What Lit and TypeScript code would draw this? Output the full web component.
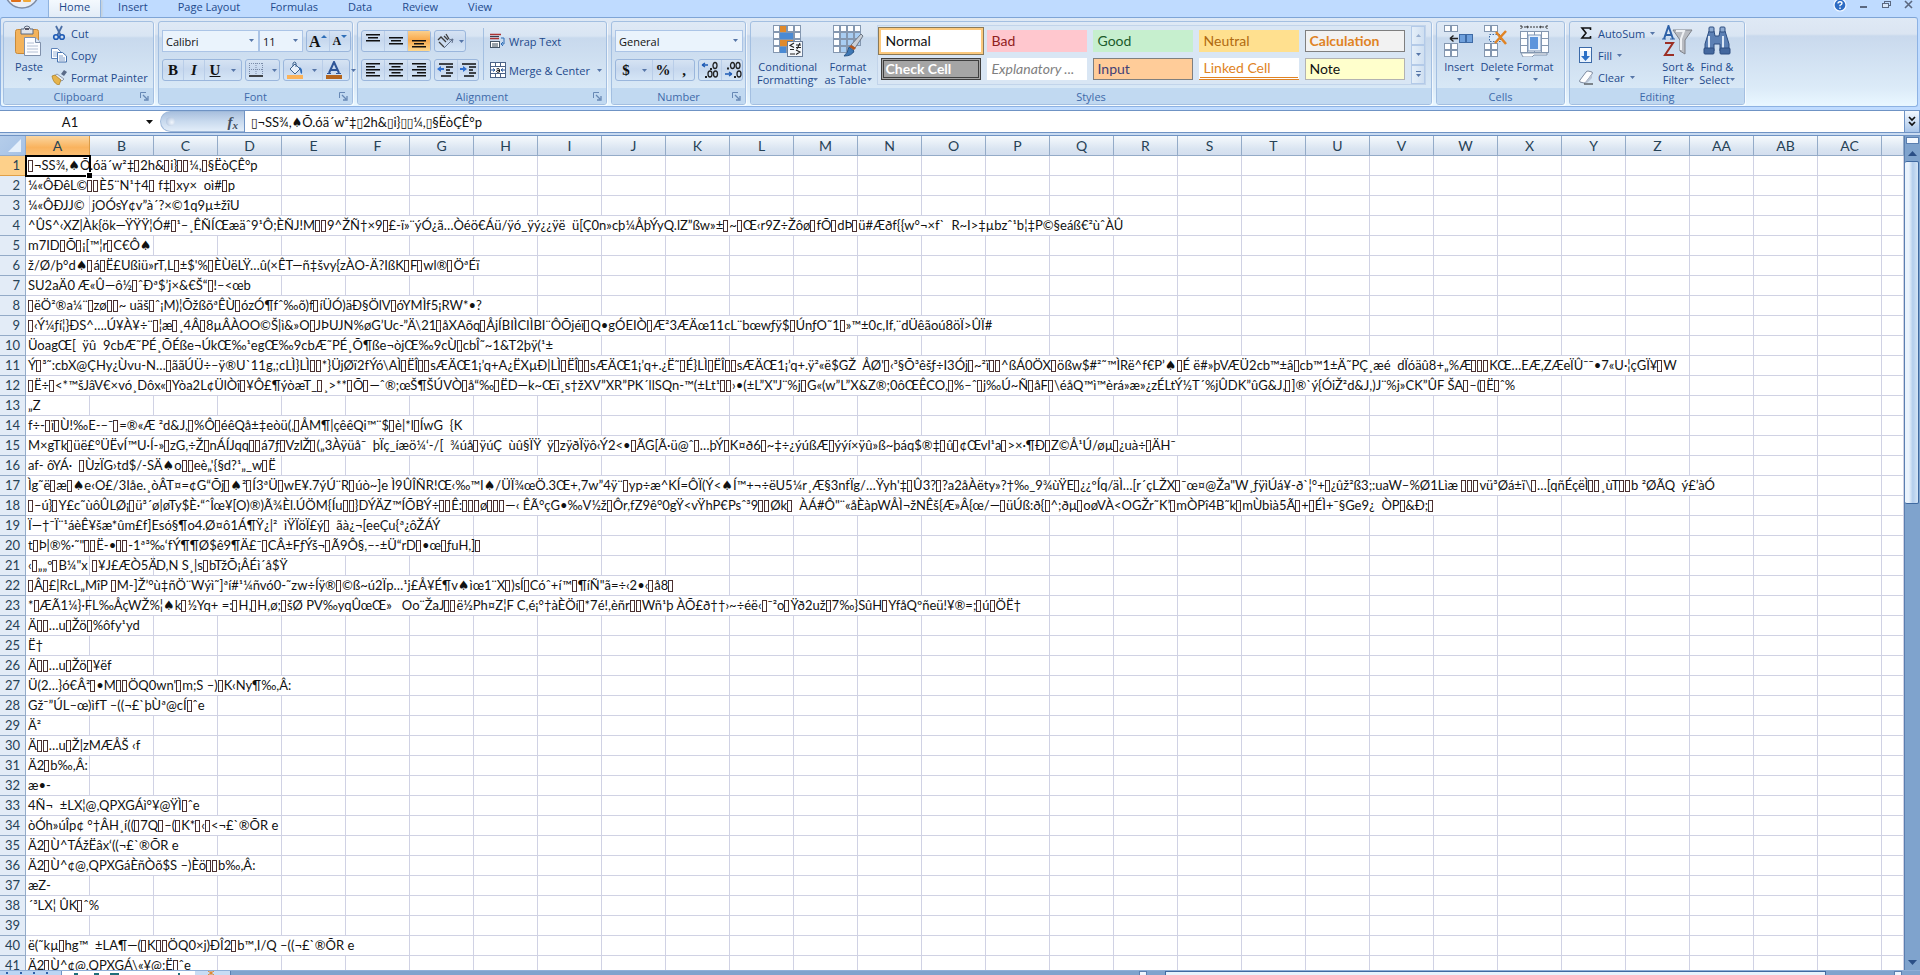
import { LitElement, html, css, svg, nothing } from "lit";
import { customElement } from "lit/decorators.js";
import { classMap } from "lit/directives/class-map.js";

type Cell = [span: number, text: string];

const COLUMNS = [..."ABCDEFGHIJKLMNOPQRSTUVWXYZ", "AA", "AB", "AC"];

const ROWS: Cell[][] = [
  [[4, "▯¬SS¾,♠Õ.óä´w²‡▯2h&▯i}▯▯¼,▯§ËòÇÊ°p"]],
  [[4, "¼«ÔÐêL©▯▯È5¨N¹†4▯ f‡▯xy×  oì#▯p"]],
  [[1, "¼«ÔÐJJ©"], [3, "jOÓsY¢v”à´?×©1q9µ±žîU"]],
  [[18, "^ÛS^‹XZ|Àk{ök—ŸŸŸ¦Ó#▯¹–¸ÊÑÍŒæäˆ9¹Ô;ÈÑJ!M▯▯9^ŽÑ†×9▯£-ï»¨ýÓ¿ã…Òéö€Áü/ÿó_ÿý¿¿ÿë  ü[Ç0n»cþ¼ÅþÝyQ.lZ”ßw»±▯~▯Œ‹r9Z÷Žôø▯fÕ▯dÞ▯ü#Æðf{{w°¬×f`  R~I>‡µbzˆ¹b¦‡P©§eáß€²ùˆÀÛ"]],
  [[2, "m7ID▯Õ▯¡[™¦r▯C€Ô♠"]],
  [[8, "ž/Ø/þ°d♠▯á▯Ë£Ußiü»rT,L▯±$'%▯ÈÙëLŸ…û(×ÊT—ñ‡švy{zÀO-Ä?IßK▯F▯wl®▯ÖªÉï"]],
  [[4, "SU2aÄ0 Æ«Û—ô½▯ˆÐª$’j×&€Š“▯!–<œb"]],
  [[8, "▯ëÖ²®a¼¨▯zø▯▯~ uäš▯ˆ¡M)¦ÕžßõªÊÙ▯ózÓ¶fˆ‰õ)f▯íÜÓ)äÐ§ÖlV▯óYMÌf5¡RW*•?"]],
  [[16, "▯‹Ý¼ƒí¦}ÐS^….Ú¥À¥÷¨▯¦æ▯¸4Â▯8µÂÀOO©Š|ì&»O▯JÞUJN%øG’Uc-”Ä\\21▯åXAõq▯ÅjÍBIÌCIÌBI¨ÔÕjéï▯Q•gÓEIÒ▯Æ²3ÆÄœ11cL¨bœwƒÿ$▯ÚnƒO˜1▯»™±0c,If,¨dÜêãoú8öÏ>ÛÏ#"]],
  [[9, "ÜoagŒ[  ÿû  9cbÆ˜PÉ¸ÕÉße¬ÚkŒ‰¹egŒ‰9cbÆ˜PÉ¸Õ¶ße¬òjŒ‰9cÙ▯cbÎ˜~1&T2þÿ(¹±"]],
  [[26, "Ý▯³˜:cbX@ÇHy¿Ùvu-N…▯ããÚÜ÷–ÿ®U`11g,;cLÌ}LÌ▯▯*}ÜjØï2fÝó\\AÌ▯ËÎ▯▯sÆÄŒ1¡’q+A¿ËXµÐ|LÌ▯ËÎ▯▯sÆÄŒ1¡’q+.¿Ë˜▯É}LÌ▯ËÎ▯▯sÆÄŒ1¡’q+.ÿ²«ë$GŽ  ÅØ'▯‹³§Õ³êšƒ÷I3Ój▯~²ï▯▯^ßÁ0ÖX▯ößw$#²˜™ÌRë^f€P’♠▯É ë#»þVÆÜ2cb™±â▯cb™1±Ä˜PÇ¸æé  dÏóäû8+„%Æ▯▯▯KŒ…EÆ,ZÆeÏÛ¯¯•7«U·¦çGÏ¥▯W"]],
  [[24, "▯Ë÷▯<*™šJâV€×vó¸Dôx«▯Yòa2L¢ÜlÒî▯¥Ô£¶ýòæT_▯¸>**▯Õ▯—ˆ®;œŠ¶ŠÚVÒ▯å“‰▯ËD—k~Œï¸s†žXV”XR”PK´llSQn-™(±Lt¹▯▯›•(±L”X\"J¨%j▯G«(w”L”X&Z®;0ôŒÊCO,▯%–ˆ▯j‰Ú~Ñ▯åF▯\\éåQ™ì™èrá»æ»¿zÉLtÝ½T´%jÛDK”ûG&J,▯]®`ý{ÓiŽ²d&J,)J¨%j»CK”ÛF ŠA▯–(▯Ë▯ˆ%"]],
  [[1, "„Z"]],
  [[7, "f÷-▯ï▯Ù!‰E-–¯▯=®«Æ ²d&J,▯%Ô▯éêQå±‡eòü(,▯ÅM¶|çêêQi™¨$▯è|*l▯ÍwG  {K"]],
  [[19, "M×gTk▯üë£°ÜËvÍ™U·Í-»▯zG,÷Ž▯nÁÍJqq▯▯á7ƒ▯VzlŽ▯(„3Àÿüå¯  þÏç_íæö¼‘-/[  ¾úå▯ÿúÇ  ùû§ÏŸ  ÿ▯zÿðÏÿô‹Ý2<•▯ÃG[Ã·ü@ˆ▯…þÝ▯K¤ð6▯~‡÷¿ýúßÆ▯ýýí×ÿû»ß~þáq$®‡▯û▯¢Œvl¹a▯>×·¶Ð▯Z©Å¹Ú/øµ▯¿uà÷▯ÄH¯"]],
  [[4, "af- ôYÁ·  ▯ÙzÏG›td$/-SÄ♠o▯▯eè„'{§d?¹„_w▯Ë"]],
  [[27, "Ìg˜ë▯æ▯♠e‹O£/3Iåe.¸òÂT¤=¢G“Õj▯♠²▯Í3ªÜ▯wE¥.7ýÚ¨R▯úò~]e Ì9ÛÎÑR!Œ‹‰™I♠/ÜÏ¾œÖ.3Œ+,7w”4ÿ¨▯yp÷æ^KÍ=ÔÏ(Ý<♠Í™+¬÷ëU5¼r¸Æ§3nfÏg/…Ÿyh'‡▯Û3?▯?a2åÀëty»?†‰_9¾ùŸE▯¿¿ºÍq/äÌ…[r´çLŽX▯¯œ¤@Ža\"W¸ƒÿìÚá¥-ð`¦°+▯¿ûž²ß3;:uaW–%Ø1Lìæ ▯▯▯vü³Øá±ï\\▯…[qñÉçëÌ▯▯¸ùT▯▯b ²ØÃQ  ý£’àÓ"]],
  [[23, "▯–ú}▯Y£c˜ùôÛLØ¡▯ü³´ø|øTy$È·“ˆÎœ¥[O)®)Ã¾Èl.ÚÖM{Íu▯▯}DÝÄZ™ÍÕBÝ÷▯▯Ê:▯▯▯ø▯▯▯—‹ ÊÃ°çG•‰V½ž▯Ôr,fZ9ê°0gŸ<vŸhP€Psˆ³9▯▯Øk▯  ÀÁ#Ô\"¨«åÈàpWÅÌ¬žNÊš{Æ»Â{œ/—▯üÚß:ð{▯^;ðµ▯oøVÀ<OGŽr˜K’▯mÒPî4B˜k▯mÙbìà5Ã▯+▯ÉÌ+¯§Ge9¿  ÒP▯&Ð;▯"]],
  [[7, "Ï—†¯Ï¨¹áèÊ¥šæ*ûm£f]Esó§¶o4.Ø¤ô1Á¶Ÿ¿|²  ìŸÏöÏ£ý▯  ãà¿¬[eeÇu{ª¿ôŽÁÝ"]],
  [[7, "t▯Þ|®%·˜\"▯▯Ë-•▯▯-1ª³‰‘fÝ¶¶Ø$ê9¶Ä£¯▯CÂ±FƒÝš¬▯Ã9Ô§,–-±Ü“rD▯•œ▯ƒuH,]▯"]],
  [[1, "‹▯„„º▯B¼\"x"], [1, "▯¥J£ÆÒ5Ä"], [3, "D,N S¸|s▯bTžÕ¡ÂÉì´å$Ÿ"]],
  [[11, "▯Â▯£|RcL„MîP ▯M-]Ž’°ù‡ñÖ¨Wýì˜]ªí#¹¼ñvó0-˜zw÷Íÿ®▯©ß~ú2Ïp…¹j£Å¥É¶v♠ìœ1¨X▯)sÍ▯Cóˆ+í™▯¶íÑ\"ã=÷‹2•‹▯å8▯"]],
  [[1, "*▯ÆÃ1¼}·F"], [15, "L‰ÅçWŽ%¦♠k▯½Yq+ =:▯H,▯H,ø;▯šØ PV‰yqÛœŒ»   Oo¨ŽaJ▯▯ë½Ph¤Z¦F C,é¡°†àÈÖí▯*7é!,èñr▯▯Wñ¹þ ÀÕ£ð††›~÷éë‹▯¯²o▯Ÿð2už▯7‰}SûH▯YfåQºñeü!¥®=;▯ú▯ÖË†"]],
  [[2, "Ä▯▯…u▯Žö▯%ôfy¹yd"]],
  [[1, "Ë†"]],
  [[2, "Ä▯▯…u▯Žö▯¥ëf"]],
  [[5, "Ü(2…}ó€Â²▯•M▯▯ÖQ0wn'▯m;S –)▯K‹Ny¶‰,Â:"]],
  [[3, "Gž¯”ÚL–œ)ìfT –((¬£`þÙª@cÍ▯ˆe"]],
  [[1, "Ä²"]],
  [[2, "Ä▯▯…u▯Ž|zMÆÅŠ ‹f"]],
  [[1, "Ä2▯b‰,Â:"]],
  [[1, "æ•-"]],
  [[3, "4Ñ¬  ±LX¦@,QPXGÁì°¥@ŸÌ▯ˆe"]],
  [[4, "òÓh»úÎp¢ °†ÂH¸í((▯7Q▯–(▯K*▯‹▯<¬£`®ÕR e"]],
  [[3, "Ä2▯Ù^TÁžËâx‘((¬£`®ÕR e"]],
  [[4, "Ä2▯Ù^¢@,QPXGáÈñÒõ$S –)Èö▯▯b‰,Â:"]],
  [[1, "æZ-"]],
  [[2, "´³LX¦ ÛK▯ˆ%"]],
  [],
  [[6, "ë(˜kµ▯hg™  ±LA¶—(▯K▯▯ÖQ0×j)ÐÎ2▯b™,I/Q –((¬£`®ÕR e"]],
  [[3, "Ä2▯Ù^¢@,QPXGÁ\\«¥@;Ë▯ˆe"]],
];

/* ---------- icons ---------- */
const icon = (w: number, h: number, body: unknown) =>
  html`<svg width=${w} height=${h} viewBox="0 0 ${w} ${h}" aria-hidden="true">${body}</svg>`;

const caret = html`<svg class="caret" width="5" height="3" viewBox="0 0 5 3" aria-hidden="true"><path d="M0 0h5L2.5 3z" fill="#5676a8" /></svg>`;

const lines = (widths: number[], align: "l" | "c" | "r", y0: number) =>
  icon(16, 16, widths.map((w, i) => {
    const x = align === "l" ? 1 : align === "c" ? (16 - w) / 2 : 15 - w;
    return svg`<rect x=${x} y=${y0 + i * 3} width=${w} height="1.5" fill="#111"/>`;
  }));

const cells = (pts: number[][], w: number, h: number, fill: string, stroke = "#8497b0") =>
  pts.map(([x, y]) => svg`<rect x=${x + 0.5} y=${y + 0.5} width=${w} height=${h} fill=${fill} stroke=${stroke}/>`);

const I = {
  paste: icon(32, 32, svg`
    <rect x="2.5" y="4.5" width="23" height="24" rx="2" fill="#f3b35c" stroke="#c98a3a"/>
    <path d="M8 4h3a3 3 0 0 1 6 0h3v5H8z" fill="#dfe3ea" stroke="#5d6b80"/><rect x="12" y="3" width="4" height="2" fill="#556"/>
    <path d="M11.5 12.5h11l5 5v13h-16z" fill="#fbfcff" stroke="#7f90ab"/><path d="M22.5 12.5v5h5" fill="#dbe6f5" stroke="#7f90ab"/>
    <path d="M14 18h7M14 21h11M14 24h11M14 27h11" stroke="#b4c0d4"/>`),
  cut: icon(16, 16, svg`<path d="M5 1l4.5 9M11 1L6.5 10" stroke="#4b6ea5" stroke-width="1.8" fill="none"/>
    <circle cx="5" cy="12" r="2.3" fill="none" stroke="#1f5bb5" stroke-width="1.6"/><circle cx="11" cy="12" r="2.3" fill="none" stroke="#1f5bb5" stroke-width="1.6"/>`),
  copy: icon(16, 16, svg`<path d="M.5 1.5h6l3 3v7h-9z" fill="#fff" stroke="#5e83b8"/><path d="M2 5h5M2 7h5M2 9h5" stroke="#9bb5d9"/>
    <path d="M6.5 5.5h5l4 3.5v6h-9z" fill="#fff" stroke="#4571ad"/><path d="M8 9h4M8 11h6M8 13h6" stroke="#7e9ecb"/>`),
  painter: icon(16, 16, svg`<path d="M10 5l3-4 3 2-3 4z" fill="#5a6b88"/><path d="M6 5l7 5-2 2-8-5z" fill="#e7ecf3" stroke="#6b7a92" stroke-width=".7"/>
    <path d="M1 7l3-1 6 5-2 5c-4-1-6-4-7-9z" fill="#e6b44c" stroke="#a87818" stroke-width=".7"/>`),
  border: icon(16, 16, svg`<path d="M1.5 1v12M8 1v12M14.5 1v12M1 1.5h14M1 7.5h14" stroke="#7a8ba8" stroke-dasharray="1 1"/><path d="M1 14h14" stroke="#111" stroke-width="1.5"/>`),
  fill: icon(18, 18, svg`<path d="M4 8l5-5 5 5-5 5z" fill="#e8f0fa" stroke="#41658f"/><path d="M7 5V2q2-2 3 0v4" fill="none" stroke="#41658f"/>
    <path d="M13 6q4 1 3 7-2-1-2-4z" fill="#2f6bb8"/><rect x="1" y="14" width="16" height="4" fill="#fbb35a"/>`),
  fontColor: icon(18, 18, svg`<path d="M4 12L9 1l5 11M6 9h6" fill="none" stroke="#2f5597" stroke-width="2"/><path d="M2 12.5h4M11 12.5h5" stroke="#2f5597"/><rect x="1" y="14" width="16" height="4" fill="#b5651d"/>`),
  orient: icon(18, 16, svg`<path d="M2 9l5 5M1 7l3-3 5 5M7 3l4 4M9 1l3 5" stroke="#3c3c3c" stroke-width="1.3" fill="none"/><path d="M7 15l9-9M16 6l-4 1M16 6l-1 4" stroke="#5f6f8a" fill="none"/>`),
  outdent: icon(18, 16, svg`<path d="M2 2h14M9 5h7M9 8h4M9 11h7M4 14h10" stroke="#111" stroke-width="1.5"/><path d="M0 7l4-3v2h3v2H4v2z" fill="#2f6fd0"/>`),
  indent: icon(18, 16, svg`<path d="M2 2h14M9 5h7M9 8h4M9 11h7M4 14h10" stroke="#111" stroke-width="1.5"/><path d="M7 7L3 4v2H0v2h3v2z" fill="#2f6fd0"/>`),
  wrap: icon(16, 16, svg`<path d="M0 1.5h11M0 5.5h9" stroke="#a33" stroke-width="1.5"/><rect x=".5" y="8.5" width="9" height="6" fill="#fff" stroke="#456"/><path d="M2 11h6M2 13h6M0 3.5h9" stroke="#345"/>
    <path d="M11 5h3v6h-3m2-2l-2 2 2 2" fill="none" stroke="#2f6fb8"/>`),
  merge: icon(16, 16, svg`<rect x=".5" y=".5" width="15" height="15" fill="#fff" stroke="#4a6286"/><path d="M0 4.5h16M0 11.5h16M5.5 0v4M10.5 0v4M5.5 12v4M10.5 12v4" stroke="#4a6286"/>
    <path d="M1 8h4M15 8h-4M3 6.5L5 8 3 9.5M13 6.5L11 8l2 1.5" stroke="#1f4f93" fill="none"/><path d="M6.5 7q3-1.5 3 1v2q-3 .8-3-.6 0-1.4 3-1" stroke="#111" fill="none"/>`),
  decUp: icon(18, 18, svg`<path d="M1 4h6M1 4l3-2M1 4l3 2" stroke="#1f5bb5" stroke-width="1.3" fill="none"/><ellipse cx="14" cy="4.5" rx="2" ry="3" fill="none" stroke="#222" stroke-width="1.3"/><rect x="9" y="7" width="2" height="2" fill="#222"/>
    <rect x="4" y="15" width="2" height="2" fill="#222"/><ellipse cx="9" cy="13" rx="2" ry="3" fill="none" stroke="#222" stroke-width="1.3"/><ellipse cx="14.5" cy="13" rx="2" ry="3" fill="none" stroke="#222" stroke-width="1.3"/>`),
  decDown: icon(18, 18, svg`<rect x="3" y="6.5" width="2" height="2" fill="#222"/><ellipse cx="8.5" cy="4.5" rx="2" ry="3" fill="none" stroke="#222" stroke-width="1.3"/><ellipse cx="14" cy="4.5" rx="2" ry="3" fill="none" stroke="#222" stroke-width="1.3"/>
    <path d="M1 13h7M8 13l-3-2M8 13l-3 2" stroke="#1f5bb5" stroke-width="1.3" fill="none"/><rect x="10" y="15" width="2" height="2" fill="#222"/><ellipse cx="15" cy="13" rx="2" ry="3" fill="none" stroke="#222" stroke-width="1.3"/>`),
  cond: icon(32, 32, svg`${cells([[1, 0], [8, 0], [15, 0], [22, 0], [1, 7], [8, 7], [15, 7], [22, 7], [1, 14], [8, 14], [15, 14], [22, 14], [1, 21], [8, 21], [15, 21], [22, 21]], 6, 6, "#fdfeff")}
    <rect x="8" y="1" width="6" height="6" fill="#e08a2c"/><rect x="8" y="8" width="13" height="6" fill="#4a8ad4"/><rect x="8" y="15" width="13" height="6" fill="#e08a2c"/><rect x="8" y="22" width="6" height="6" fill="#4a8ad4"/>
    <rect x="15.5" y="16.5" width="15" height="15" fill="#f4f7fb" stroke="#6a7d99"/><path d="M22 18l-4 2.5 4 2M18 24.5h4M24 20h5M24 22.5h5M28 18l-3 6M24 25l4 2-4 2.5M18 29h5" stroke="#222" stroke-width="1.1" fill="none"/>`),
  fmtTable: icon(32, 32, svg`${cells([[1, 0], [8, 0], [15, 0], [22, 0], [1, 7], [1, 14], [1, 21]], 6, 6, "#fdfeff")}${cells([[8, 7], [15, 7], [22, 7], [8, 14], [15, 14], [22, 14], [8, 21], [15, 21]], 6, 6, "#a9cdf2")}
    <path d="M29 9l2 2-8 12-4-3z" fill="#c9cfd8" stroke="#6d7683"/><path d="M19 20l5 3-2 2-5-3z" fill="#b5561c"/><path d="M17 22l5 4q-2 5-10 5 4-3 5-9z" fill="#3f78b5" stroke="#2b5687"/>`),
  insert: icon(32, 32, svg`${cells([[1, 0], [8, 0], [1, 18], [8, 18], [1, 25], [8, 25]], 6, 6, "#fdfeff")}${cells([[16, 9], [23, 9]], 6, 8, "#6fa0dc", "#3e6aa5")}<path d="M7 13.5h8M7 13.5l3.5-3M7 13.5l3.5 3" stroke="#222" stroke-width="1.4" fill="none"/>`),
  del: icon(32, 32, svg`${cells([[3, 0], [10, 0], [3, 18], [10, 18], [3, 25], [10, 25]], 6, 6, "#fdfeff")}<rect x="8.5" y="9.5" width="11" height="7" fill="#dcebfb" stroke="#3e6aa5" stroke-dasharray="1.5 1.5"/><path d="M15 7l10 12M25 6L14 18" stroke="#e08324" stroke-width="2.5"/>`),
  format: icon(32, 32, svg`<path d="M2 2h26M2 0v4M28 0v4M9 1l-2 1 2 1M21 1l2 1-2 1" stroke="#333" stroke-dasharray="2 1" fill="none"/>${cells([[1, 6], [8, 6], [15, 6], [22, 6], [1, 13], [22, 13], [1, 20], [8, 20], [15, 20], [22, 20]], 7, 7, "#fdfeff")}
    <rect x="9" y="10" width="13" height="16" fill="#e9f2fc" stroke="#7f95b5"/><rect x="11" y="12" width="8" height="12" fill="#5d95dc"/><path d="M2 28h26v2H15l-2 2H4z" fill="#fdfeff" stroke="#8497b0"/>`),
  fillDown: icon(16, 16, svg`<rect x="1.5" y=".5" width="12" height="15" fill="#eaf3fd" stroke="#3c6aa8"/><rect x="2" y="1" width="11" height="3" fill="#fff"/><path d="M6 4h3v5h3l-4.5 5L3 9h3z" fill="#2a6fc6"/>`),
  clear: icon(16, 16, svg`<path d="M2 11L8 3q1-1 2-1l4 1q1 1 0 2l-6 8q-1 1-2 1l-4-1q-1-1 0-2z" fill="#fdfdfe" stroke="#7e8ba0"/><path d="M7 14l7-9v4l-5 5z" fill="#b8c3d4"/><path d="M6 15h9" stroke="#222"/>`),
  sort: icon(32, 32, svg`<path d="M2 14L6.5 1 11 14M3.5 10h6" fill="none" stroke="#2f62a8" stroke-width="2"/><path d="M0 14h4M8 14h5" stroke="#2f62a8"/><path d="M3 18h8L3 30h9" fill="none" stroke="#9c2f25" stroke-width="2"/>
    <path d="M11 5h19l-7 10v14l-5-3V15z" fill="#b9bcc2" stroke="#7e828a"/><path d="M14 6h8l-3 8v11" fill="none" stroke="#eef0f3" stroke-width="2"/>`),
  find: icon(32, 32, svg`<path d="M8 6h5l1 5h4l1-5h5l4 13v7h-9v-7h-6v7H4v-7z" fill="#5c80b4" stroke="#2c4d80"/><rect x="8" y="2" width="5" height="5" rx="1" fill="#8eabd2" stroke="#2c4d80"/><rect x="19" y="2" width="5" height="5" rx="1" fill="#8eabd2" stroke="#2c4d80"/>
    <path d="M8 11v13M22 11v13" stroke="#dbe7f6" stroke-width="2"/><rect x="3" y="23" width="10" height="6" rx="1" fill="#44689e" stroke="#2c4d80"/><rect x="19" y="23" width="10" height="6" rx="1" fill="#44689e" stroke="#2c4d80"/>`),
};

@customElement("app-root")
export class AppRoot extends LitElement {
  static styles = css`
    :host {
      display: flex; flex-direction: column; height: 100vh; overflow: hidden;
      font: 11px/13px "Open Sans", "Noto Sans", sans-serif; color: #1e4a8c;
      background: #bfdbff;
    }
    * { box-sizing: border-box; }
    svg { display: block; flex: none; }
    button {
      font: inherit; color: inherit; background: none; border: 0; padding: 0; margin: 0;
      display: flex; align-items: center; justify-content: center; white-space: nowrap;
    }
    .caret { margin-left: 4px; }

    .tabs { position: relative; display: flex; height: 17px; padding-left: 48px; align-items: stretch; }
    .orb { position: absolute; left: 4px; top: 0; }
    .tab { height: 17px; line-height: 14px; padding: 0 15px 3px; }
    .tab.on { padding: 0 10px 3px; margin-right: 2px; background: linear-gradient(#f4f9fe, #e2ecf7); border: 1px solid #8fb3e0; border-width: 0 1px; box-shadow: 1px 0 2px #d8b97a66; }
    .win { margin-left: auto; display: flex; align-items: flex-start; gap: 12px; padding-right: 6px; }

    .ribbon {
      display: flex; gap: 4px; height: 90px; padding: 3px 2px 1px; margin-right: 2px;
      border: 1px solid #8db2e3; border-radius: 3px; border-top-color: #7fa5d6;
      background: linear-gradient(#dfe9f5 0, #dbe5f2 16px, #c9d9ed 18px, #dcebf8 70px, #e8f6ff 86px);
    }
    .grp {
      display: flex; flex-direction: column; height: 84px; border: 1px solid #a3bfe1; border-radius: 3px;
      background: linear-gradient(#dfe9f5 0, #d9e5f3 14px, #c8d9ed 16px, #d8e8f6 66px);
      box-shadow: 1px 1px 0 #ffffffaa; flex: none;
    }
    .body { flex: 1; display: flex; padding: 0 3px; min-height: 0; }
    .cap { position: relative; height: 16px; background: #c1d9f1; color: #3e6aaa; text-align: center; line-height: 17px; border-radius: 0 0 2px 2px; }
    .launch { position: absolute; right: 4px; top: 4px; }
    .clip { width: 151px; } .font { width: 195px; } .align { width: 250px; } .num { width: 135px; }
    .styles { width: 682px; } .cells { width: 129px; } .edit { width: 176px; }

    .big { flex-direction: column; justify-content: flex-start; padding-top: 3px; min-width: 38px; line-height: 13px; }
    .clip .big { min-width: 44px; }
    .styles .big { padding: 3px 3px 0; }
    .edit .big { padding: 3px 2px 0; }
    .edit .stack { padding-left: 5px; margin-right: 4px; }
    .big svg:first-child { margin-bottom: 3px; }
    .big .row2 { display: flex; align-items: center; height: 13px; }
    .big .row2 .caret:only-child { margin: 0; }
    .stack { display: flex; flex-direction: column; }
    .small { height: 22px; gap: 4px; justify-content: flex-start; }
    .small .caret { margin-left: 1px; }

    .rows { display: flex; flex-direction: column; gap: 7px; padding-top: 8px; }
    .line { display: flex; gap: 3px; height: 22px; align-items: stretch; }
    .set { display: flex; border: 1px solid #9ab6dc; border-radius: 3px; background: linear-gradient(#d6e3f3, #c7d8ee 45%, #d5e5f6); }
    .set button { flex: 1; padding: 0 2px; }
    .set button + button { border-left: 1px solid #b9cde8; }
    .set .drop { flex: 0 0 16px; border-left: 0; }
    .set button.drop { border-left: 0; }
    .set .drop .caret { margin: 0; }
    .set .on { background: linear-gradient(#fbcf8c, #f9a94a 45%, #fdd890); }
    .combo { position: relative; display: flex; }
    .combo select {
      width: 100%; height: 22px; appearance: none; border: 1px solid #abc4e6; border-radius: 0; background: #eaf3fc;
      font: inherit; color: #111; padding: 0 3px; margin: 0;
    }
    .combo .caret { position: absolute; right: 5px; top: 9px; }
    .fonts { gap: 0; } .fonts .set { margin-left: 3px; }
    .w96 { width: 97px; } .w44 { width: 44px; } .w45 { width: 45px; } .w80 { width: 80px; } .w35 { width: 35px; }
    .w67 { width: 67px; } .w69 { width: 70px; } .w31 { width: 32px; } .w128 { width: 128px; }
    .b, .i, .u, .glyph { font-family: "Liberation Serif", serif; font-size: 15px; color: #111; font-weight: bold; }
    .i { font-style: italic; } .u { text-decoration: underline; }
    .grow { font-size: 16px; } .shrink { font-size: 12px; }
    .sep { width: 1px; margin: 6px 6px 8px 4px; background: #a3bfe1; }
    .text { height: 22px; justify-content: flex-start; gap: 3px; }

    .gallery { flex: 1; display: flex; justify-content: space-between; margin: 3px 2px 3px 2px; border: 1px solid #c2d4ea; background: #d9e6f4; font: 14px/20px Lato, "Open Sans", sans-serif; }
    .swatches { display: grid; grid-template-columns: repeat(5, 100px); gap: 6px; padding: 4px 3px; grid-auto-rows: 22px; }
    .swatches button { justify-content: flex-start; padding: 0 4px; border: 1px solid transparent; overflow: hidden; }
    .sw-normal { background: #fff; color: #111; box-shadow: 0 0 0 2px #fcc97d, 0 0 0 3px #8b7a58; }
    .sw-bad { background: #ffc7ce; color: #8f2020; } .sw-good { background: #c6efce; color: #1c5c2c; }
    .sw-neutral { background: #ffe08f; color: #b06a10; }
    .swatches .sw-calc { background: #f2f2f2; color: #e08324; border-color: #7f7f7f; font-weight: bold; }
    .swatches .sw-check { background: #a5a5a5; color: #fff; border: 3px double #3f3f3f; padding: 0 2px; font-weight: bold; }
    .sw-expl { background: #fff; color: #7f7f7f; font-style: italic; }
    .swatches .sw-input { background: #ffcc99; color: #3f3f76; border-color: #7f7f7f; }
    .swatches .sw-linked { background: #fff; color: #e08324; border-bottom: 3px double #e08324; }
    .swatches .sw-note { background: #ffffcc; color: #111; border-color: #b2b2b2; }
    .gscroll { display: flex; flex-direction: column; width: 14px; }
    .gscroll button { flex: 1; border: 1px solid #b3cae8; background: linear-gradient(90deg, #e5eff9, #cfdff1); }
    .gscroll .caret { margin: 0; } .up .caret { transform: rotate(180deg); opacity: .5; }
    .mbar { border-top: 1px solid #5676a8; padding-top: 2px; }

    .fbar { display: flex; align-items: flex-start; height: 25px; flex: none; border-top: 1px solid #6f93c4; margin-top: 3px; background: #c9dbf1; }
    .name { position: relative; width: 160px; background: #fff; border-bottom: 1px solid #6f93c4; }
    .fbar input { display: block; width: 100%; height: 21px; border: 0; outline: 0; padding: 0; margin: 0; background: #fff; color: #111; font: 13px/20px Lato, "DejaVu Sans Condensed", sans-serif; }
    .name input { text-align: center; padding-right: 20px; }
    .name svg { position: absolute; right: 7px; top: 9px; }
    .fx { width: 84px; height: 22px; display: flex; justify-content: flex-end; background: linear-gradient(90deg, #fff 12px, transparent 12px); border-bottom: 1px solid #6f93c4; }
    .pill { flex: 1; height: 21px; border-radius: 11px 0 0 11px; border: 1px solid #9fb9da; border-right: 0; background: linear-gradient(#a9c0de, #c9daee 50%, #e2edf9); display: flex; align-items: center; justify-content: space-between; padding: 0 6px 0 5px; }
    .knob { width: 9px; height: 9px; border-radius: 50%; background: radial-gradient(circle at 65% 60%, #f2f7fd, #9fb6d6); }
    .fx i { font: italic bold 15px/18px "Liberation Serif", serif; color: #444f60; }
    .fx sub { font-size: 11px; line-height: 0; vertical-align: -2px; }
    .formula { flex: 1; border-left: 1px solid #6f93c4; border-bottom: 1px solid #6f93c4; background: #fff; padding-left: 6px; }
    .expand { width: 16px; height: 22px; border: 1px solid #6f93c4; border-top: 0; background: linear-gradient(#f4f9ff, #a9c6ea); }

    .sheet { flex: 1; display: flex; min-height: 0; border-top: 1px solid #6f93c4; background: #fff; }
    .view { flex: 1; overflow: hidden; min-width: 0; }
    table { table-layout: fixed; width: 100%; border-collapse: separate; border-spacing: 0; font: 13px/19px Lato, "Open Sans", "DejaVu Sans", sans-serif; color: #111; }
    .c0 { width: 26px; } .c { width: 64px; }
    th, td { height: 20px; padding: 0; font-weight: normal; border: 0 solid #d0d2e4; border-width: 0 1px 1px 0; }
    th { color: #274256; border-color: #94abc8; background: linear-gradient(#f6fafd, #d9e4f1 70%, #d3deee); font-size: 14px; }
    tbody th { background: #e3ecf7; text-align: right; padding-right: 5px; font-size: 13px; }
    thead th.on { background: linear-gradient(#fbd6a0, #f9b35e 60%, #fbbf73); border-color: #d99b48; }
    tbody th.on { background: #fdd08a; border-color: #e0a048; }
    .corner { background: linear-gradient(135deg, #b5cdea, #a6c2e6); padding: 2px 4px; }
    .corner svg { margin-left: auto; }
    td { position: relative; white-space: pre; }
    .t { display: block; height: 19px; padding-left: 2px; white-space: pre; }
    .nb { display: inline-block; width: 5px; height: 12px; margin: 0 1px 0 0; border: 1px solid #4a3030; vertical-align: -2px; }
    .sel { position: absolute; left: -1px; top: -1px; width: 66px; height: 22px; border: 2px solid #000; z-index: 1; }
    .sel::after { content: ""; position: absolute; right: -3px; bottom: -3px; width: 5px; height: 5px; background: #000; border: 1px solid #fff; border-width: 1px 0 0 1px; }

    .vbar { width: 16px; display: flex; flex-direction: column; background: #7fa3cd; border-left: 1px solid #5a7fb0; }
    .split { height: 7px; margin: 1px; background: #f4f9ff; border: 1px solid #5a7fb0; }
    .arrow { height: 16px; }
    .vthumb { flex: 0 1 343px; margin-right: 1px; border: 1px solid #3f69a0; border-left: 0; border-radius: 2px; background: linear-gradient(90deg, #eaf3fd 30%, #b3cdec 60%, #d3e4f6); }
    .vrest { flex: 1; display: flex; align-items: flex-end; justify-content: center; padding-bottom: 5px; }

    .foot { flex: none; display: flex; height: 5px; border-top: 1px solid #8fb0d8; background: #7fa3cd; }
    .nav { width: 62px; background: #bcd5f3; border-right: 1px solid #6f93c4; padding: 1px 6px 0; }
    .sheet-tab { width: 133px; background: #fff; padding: 1px 12px 0; justify-content: flex-start; }
    .new-tab { width: 36px; background: #c8dcf4; border-right: 1px solid #5a7fb0; }
    .hspace { flex: 910; }
    .grip { width: 8px; background: #eef6ff; border: 1px solid #5a7fb0; border-bottom: 0; }
    .hleft { width: 18px; }
    .hthumb { flex: 660; background: #e6f3fd; border: 1px solid #3f69a0; border-bottom: 0; }
    .hright { width: 68px; }
    .end { width: 18px; }
  `;

  private group(cls: string, label: string, body: unknown, launcher = true) {
    return html`<section class="grp ${cls}" aria-label=${label}>
      <div class="body">${body}</div>
      <div class="cap">${label}${launcher
        ? html`<button class="launch" aria-label="${label} options">${icon(9, 9, svg`<path d="M.5 6V.5H6" fill="none" stroke="#6788b5"/><path d="M3 3l4 4M8 4v4H4" fill="none" stroke="#6788b5" stroke-width="1.3"/>`)}</button>`
        : nothing}</div>
    </section>`;
  }

  private big(ic: unknown, l1: string, l2 = "") {
    return html`<button class="big">${ic}<span>${l1}</span><span class="row2">${l2}${caret}</span></button>`;
  }

  private combo(cls: string, label: string, value: string) {
    return html`<div class="combo ${cls}"><select aria-label=${label}><option>${value}</option></select>${caret}</div>`;
  }

  private ribbon() {
    const drop = (l: string) => html`<button class="drop" aria-label=${l}>${caret}</button>`;
    return html`<div class="ribbon">
      ${this.group("clip", "Clipboard", html`
        ${this.big(I.paste, "Paste")}
        <div class="stack">
          <button class="small">${I.cut}Cut</button>
          <button class="small">${I.copy}Copy</button>
          <button class="small">${I.painter}Format Painter</button>
        </div>`)}
      ${this.group("font", "Font", html`<div class="rows">
        <div class="line fonts">${this.combo("w96", "Font name", "Calibri")}${this.combo("w44", "Font size", "11")}
          <div class="set w45"><button class="glyph grow" aria-label="Grow font">A${icon(6, 14, svg`<path d="M0 4l3-3 3 3z" fill="#2f6fb8"/>`)}</button><button class="glyph shrink" aria-label="Shrink font">A${icon(6, 14, svg`<path d="M0 1h6L3 4z" fill="#2f6fb8"/>`)}</button></div></div>
        <div class="line">
          <div class="set w80"><button class="b">B</button><button class="i">I</button><button class="u">U</button>${drop("Underline style")}</div>
          <div class="set w35"><button aria-label="Borders">${I.border}</button>${drop("Border style")}</div>
          <div class="set w67"><button aria-label="Fill color">${I.fill}</button>${drop("Fill colors")}<button aria-label="Font color">${I.fontColor}</button>${drop("Font colors")}</div>
        </div></div>`)}
      ${this.group("align", "Alignment", html`<div class="rows">
        <div class="line">
          <div class="set w69"><button aria-label="Top align">${lines([14, 10, 14], "c", 1)}</button><button aria-label="Middle align">${lines([14, 10, 14], "c", 4)}</button><button class="on" aria-label="Bottom align">${lines([14, 10, 14], "c", 7)}</button></div>
          <div class="set w31"><button aria-label="Orientation">${I.orient}${caret}</button></div>
        </div>
        <div class="line">
          <div class="set w69"><button aria-label="Align left">${lines([14, 9, 14, 9, 14], "l", 1)}</button><button aria-label="Center">${lines([14, 9, 14, 9, 14], "c", 1)}</button><button aria-label="Align right">${lines([14, 9, 14, 9, 14], "r", 1)}</button></div>
          <div class="set w45"><button aria-label="Decrease indent">${I.outdent}</button><button aria-label="Increase indent">${I.indent}</button></div>
        </div></div>
        <div class="sep"></div>
        <div class="rows"><button class="text">${I.wrap}Wrap Text</button><button class="text">${I.merge}Merge &amp; Center${caret}</button></div>`)}
      ${this.group("num", "Number", html`<div class="rows">
        <div class="line">${this.combo("w128", "Number format", "General")}</div>
        <div class="line"><div class="set w80"><button class="glyph">$</button>${drop("Currencies")}<button class="glyph">%</button><button class="glyph">,</button></div>
          <div class="set w45"><button aria-label="Increase decimal">${I.decUp}</button><button aria-label="Decrease decimal">${I.decDown}</button></div></div></div>`)}
      ${this.group("styles", "Styles", html`
        ${this.big(I.cond, "Conditional", "Formatting")}
        ${this.big(I.fmtTable, "Format", "as Table")}
        <div class="gallery"><div class="swatches">
          <button class="sw-normal">Normal</button><button class="sw-bad">Bad</button><button class="sw-good">Good</button><button class="sw-neutral">Neutral</button><button class="sw-calc">Calculation</button>
          <button class="sw-check">Check Cell</button><button class="sw-expl">Explanatory ...</button><button class="sw-input">Input</button><button class="sw-linked">Linked Cell</button><button class="sw-note">Note</button>
        </div><div class="gscroll"><button class="up" aria-label="Previous styles">${caret}</button><button aria-label="Next styles">${caret}</button><button aria-label="More styles"><span class="mbar">${caret}</span></button></div></div>`, false)}
      ${this.group("cells", "Cells", html`${this.big(I.insert, "Insert")}${this.big(I.del, "Delete")}${this.big(I.format, "Format")}`, false)}
      ${this.group("edit", "Editing", html`
        <div class="stack">
          <button class="small">${icon(16, 16, svg`<path d="M12.5 5V3H4l4 5-4 5h8.500v-2" fill="none" stroke="#111" stroke-width="1.6"/>`)}AutoSum${caret}</button>
          <button class="small">${I.fillDown}Fill${caret}</button>
          <button class="small">${I.clear}Clear${caret}</button>
        </div>
        ${this.big(I.sort, "Sort &", "Filter")}${this.big(I.find, "Find &", "Select")}`, false)}
    </div>`;
  }

  private cellText(text: string) {
    return text.split(/(▯)/).map((p) => (p === "▯" ? html`<span class="nb"></span>` : p));
  }

  private row(data: Cell[], index: number) {
    const used = data.reduce((n, [span]) => n + span, 0);
    const rest = Array.from({ length: COLUMNS.length + 1 - used });
    return html`<tr><th scope="row" class=${classMap({ on: index === 0 })}>${index + 1}</th>${data.map(([span, text]) => html`<td colspan=${span}><span class="t">${this.cellText(text)}</span>${index === 0 ? html`<div class="sel"></div>` : nothing}</td>`)}${rest.map(() => html`<td></td>`)}</tr>`;
  }

  render() {
    return html`
      <nav class="tabs">
        <svg class="orb" width="36" height="10" viewBox="0 0 36 10" aria-hidden="true"><circle cx="18" cy="-9" r="17" fill="#e9eef6" stroke="#7d8ba3" stroke-width="1.5"/><rect x="7" y="-4" width="10" height="6" rx="1" fill="#e0701a"/><rect x="19" y="-4" width="8" height="6" rx="1" fill="#f0a83a"/></svg>
        ${["Home", "Insert", "Page Layout", "Formulas", "Data", "Review", "View"].map((t, i) => html`<button class=${classMap({ tab: true, on: i === 0 })}>${t}</button>`)}
        <div class="win">
          <button aria-label="Help">${icon(14, 12, svg`<circle cx="7" cy="5" r="6" fill="#2d6cc4" stroke="#f4f8ff" stroke-width="1.2"/><path d="M5 3.5q0-1.8 2-1.8t2 1.6q0 1.2-2 2v1M7 7.5v1.5" stroke="#fff" stroke-width="1.4" fill="none"/>`)}</button>
          <button aria-label="Minimize">${icon(10, 12, svg`<rect x="1" y="6" width="7" height="2" fill="#5b6880"/>`)}</button>
          <button aria-label="Restore">${icon(11, 12, svg`<rect x="3.5" y="1.5" width="6" height="4" fill="none" stroke="#5b6880"/><rect x="1.5" y="3.5" width="6" height="4" fill="#d9e7f8" stroke="#5b6880"/>`)}</button>
          <button aria-label="Close">${icon(10, 12, svg`<path d="M1 1l7 7M8 1L1 8" stroke="#5b6880" stroke-width="1.6"/>`)}</button>
        </div>
      </nav>
      ${this.ribbon()}
      <div class="fbar">
        <div class="name"><input aria-label="Name box" .value=${"A1"} /><svg width="7" height="4" viewBox="0 0 7 4" aria-hidden="true"><path d="M0 0h7L3.5 4z" fill="#111"/></svg></div>
        <div class="fx"><div class="pill"><span class="knob"></span><i>f<sub>x</sub></i></div></div>
        <div class="formula"><input aria-label="Formula" .value=${ROWS[0][0][1]} /></div>
        <button class="expand" aria-label="Expand formula bar">${icon(8, 12, svg`<path d="M1 1l3 3 3-3M1 6l3 3 3-3" fill="none" stroke="#111" stroke-width="1.7"/>`)}</button>
      </div>
      <main class="sheet">
        <div class="view"><table>
          <colgroup><col class="c0" />${COLUMNS.map(() => html`<col class="c" />`)}<col /></colgroup>
          <thead><tr><th class="corner">${icon(13, 13, svg`<path d="M13 0v13H0z" fill="#e6f0fb"/>`)}</th>${COLUMNS.map((c, i) => html`<th scope="col" class=${classMap({ on: i === 0 })}>${c}</th>`)}<th></th></tr></thead>
          <tbody>${ROWS.map((r, i) => this.row(r, i))}</tbody>
        </table></div>
        <div class="vbar">
          <div class="split"></div>
          <button class="arrow" aria-label="Scroll up">${icon(9, 5, svg`<path d="M0 5h9L4.5 0z" fill="#2b4f86"/>`)}</button>
          <div class="vthumb"></div>
          <button class="vrest" aria-label="Scroll down">${icon(9, 5, svg`<path d="M0 0h9L4.5 5z" fill="#2b4f86"/>`)}</button>
        </div>
      </main>
      <footer class="foot">
        <div class="nav">${icon(50, 2, svg`<path d="M0 1h2M14 1h2M27 1h2M40 1h2" stroke="#2f5fa8" stroke-width="2"/>`)}</div>
        <button class="sheet-tab" aria-label="Sheet">${icon(106, 3, svg`<path d="M0 2h4M20 2h5M36 2h9M104 2h2" stroke="#1f6f7a" stroke-width="2"/>`)}</button>
        <button class="new-tab" aria-label="New sheet">${icon(12, 4, svg`<path d="M1 0l6 4M7 0L1 4M4 0v4" stroke="#e08324"/>`)}</button>
        <div class="hspace"></div><div class="grip"></div><div class="hleft"></div><div class="hthumb"></div><div class="hright"></div><div class="grip"></div><div class="end"></div>
      </footer>`;
  }
}
